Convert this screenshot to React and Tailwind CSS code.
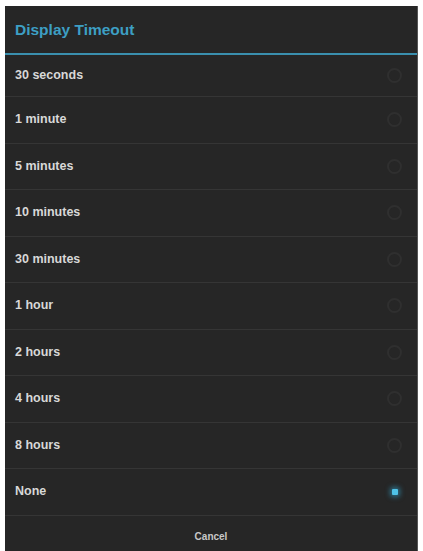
const options = [
  "30 seconds",
  "1 minute",
  "5 minutes",
  "10 minutes",
  "30 minutes",
  "1 hour",
  "2 hours",
  "4 hours",
  "8 hours",
  "None",
]

function Radio({ checked }) {
  if (checked) {
    return (
      <span className="flex h-[15px] w-[15px] items-center justify-center">
        <span className="h-[6px] w-[6px] rounded-[1px] bg-[#4fc3e8] shadow-[0_0_5px_2px_rgba(51,181,229,0.5)]" />
      </span>
    )
  }
  return <span className="h-[15px] w-[15px] rounded-full border-2 border-[#2f2f2f]" />
}

function OptionRow({ label, checked, first }) {
  return (
    <div
      className={
        first
          ? "flex h-[42px] items-center justify-between border-b border-[#353535] pl-[10px] pr-[15px]"
          : "flex h-[46.5px] items-center justify-between border-b border-[#353535] pl-[10px] pr-[15px]"
      }
    >
      <span className="text-[12.5px] font-semibold text-[#d8d8d8]">{label}</span>
      <Radio checked={checked} />
    </div>
  )
}

export default function App() {
  const selected = "None"

  return (
    <div className="h-[551px] w-[423px] overflow-hidden bg-white pl-[5px] pr-[5px] pt-[6px] font-['Liberation_Sans',Arial,sans-serif]">
      <div className="h-full w-full border-r border-[#555] bg-[#262626]">
        <div className="flex h-[47px] items-center pl-[10px]">
          <h1 className="text-[15.5px] font-bold text-[#3d9fc4]">Display Timeout</h1>
        </div>
        <div className="h-[2px] bg-[#3a8fae]" />
        {options.map((label, i) => (
          <OptionRow
            key={label}
            label={label}
            first={i === 0}
            checked={label === selected}
          />
        ))}
        <div className="flex h-[42px] items-center justify-center">
          <span className="text-[10px] font-semibold text-[#c8c8c8]">Cancel</span>
        </div>
      </div>
    </div>
  )
}
